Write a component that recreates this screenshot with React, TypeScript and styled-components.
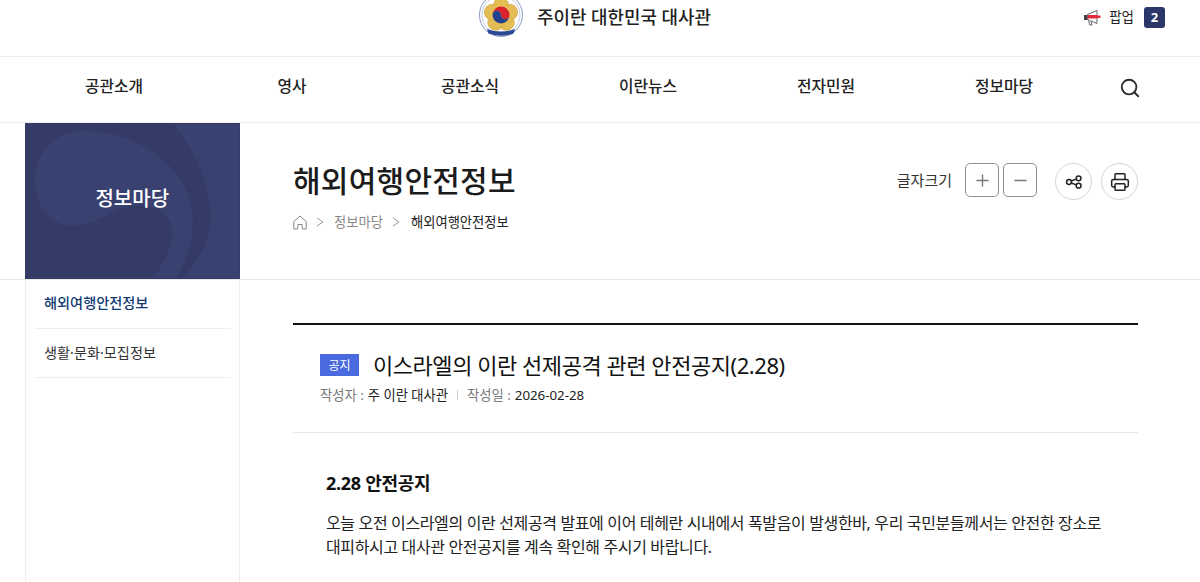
import styled, { createGlobalStyle } from "styled-components";
import { Search, Plus, Minus, Printer } from "lucide-react";

const GlobalStyle = createGlobalStyle`
  html, body {
    margin: 0;
    padding: 0;
    height: 582px;
    overflow: hidden;
    background: #fff;
    font-family: "Noto Sans", "Noto Sans CJK KR", sans-serif;
    color: #111;
  }
`;

const TopBar = styled.header`
  height: 56px;
  position: relative;
  display: flex;
  justify-content: center;
  overflow: hidden;
  border-bottom: 1px solid #eee;
`;

const Brand = styled.div`
  display: flex;
  align-items: center;
  gap: 13px;
  height: 32px;
  margin-left: -11px;
  font-size: 17.9px;
  font-weight: 500;
  color: #222;
`;

const Emblem = styled.svg`
  width: 46px;
  height: 46px;
  flex: none;
  align-self: flex-start;
  margin-top: -8px;
`;

const PopupLink = styled.div`
  position: absolute;
  right: 35px;
  top: 6px;
  display: flex;
  align-items: center;
  font-size: 13.5px;
  color: #222;
`;

const PopupLabel = styled.span`
  margin: 0 9px 2px 8px;
`;

const PopupCount = styled.span`
  width: 21px;
  height: 21px;
  margin-left: 1px;
  border-radius: 3px;
  background: #2b3768;
  color: #fff;
  font-size: 13px;
  font-weight: 700;
  display: flex;
  align-items: center;
  justify-content: center;
`;

const Nav = styled.nav`
  height: 65px;
  border-bottom: 1px solid #eee;
  display: flex;
  align-items: center;
  padding: 0 59px 0 25px;
`;

const NavList = styled.ul`
  list-style: none;
  margin: 0;
  padding: 0 0 8px;
  flex: 1;
  display: grid;
  grid-template-columns: repeat(6, 178px);
  justify-items: center;
`;

const NavItem = styled.li`
  font-size: 15.8px;
  font-weight: 500;
  color: #222;
`;

const SearchButton = styled.span`
  display: flex;
  color: #2a2a2a;
  margin-bottom: 4px;
`;

const Hero = styled.section`
  height: 156px;
  border-bottom: 1px solid #e8e8e8;
  display: flex;
  padding: 0 62px 0 25px;
`;

const SideTitle = styled.div`
  width: 214.5px;
  flex: none;
  position: relative;
  overflow: hidden;
  background: #343b67;
  display: flex;
  align-items: center;
  justify-content: center;
  padding-bottom: 7px;
  box-sizing: border-box;
  color: #fff;
  font-size: 20px;
  font-weight: 500;
`;

const SideSwirl = styled.svg`
  position: absolute;
  inset: 0;
  width: 100%;
  height: 100%;
`;

const SideTitleText = styled.span`
  position: relative;
`;

const HeroBody = styled.div`
  flex: 1;
  padding: 36px 0 0 53.5px;
  display: flex;
  justify-content: space-between;
`;

const PageTitle = styled.h1`
  margin: 0;
  font-size: 30px;
  line-height: 44px;
  font-weight: 500;
  letter-spacing: 0.25px;
  color: #1b1b1b;
`;

const Crumbs = styled.div`
  display: flex;
  align-items: center;
  margin-top: 9px;
  font-size: 13.3px;
  line-height: 20px;
  color: #888;
`;

const CrumbSep = styled.svg`
  width: 8px;
  height: 10px;
  margin: 0 10px 0 9px;
`;

const CrumbCurrent = styled.span`
  color: #222;
  margin-left: 1px;
`;

const Tools = styled.div`
  display: flex;
  align-items: flex-start;
  height: 38px;
  margin-top: 4px;
`;

const ToolLabel = styled.span`
  font-size: 15px;
  line-height: 35px;
  color: #333;
  margin-right: 13px;
`;

const SquareButton = styled.span`
  width: 34px;
  height: 34px;
  box-sizing: border-box;
  border: 1px solid #8f8f8f;
  border-radius: 5px;
  margin-right: 4px;
  display: flex;
  align-items: center;
  justify-content: center;
  color: #777;
`;

const RoundButton = styled.span<{ $gap: number }>`
  width: 37px;
  height: 37px;
  box-sizing: border-box;
  border: 1px solid #d4d4d4;
  border-radius: 50%;
  margin-left: ${(p) => p.$gap}px;
  display: flex;
  align-items: center;
  justify-content: center;
  color: #222;
`;

const Main = styled.div`
  display: flex;
  padding: 0 62px 0 25px;
  height: 302px;
`;

const Side = styled.aside`
  width: 215px;
  flex: none;
  box-sizing: border-box;
  border: solid #eee;
  border-width: 0 1px;
  padding: 0 8px;
`;

const SideItem = styled.div<{ $active?: boolean }>`
  height: 49px;
  box-sizing: border-box;
  border-bottom: 1px solid #eee;
  padding: 0 0 ${(p) => (p.$active ? 4 : 2)}px 10px;
  display: flex;
  align-items: center;
  font-size: 14.2px;
  font-weight: ${(p) => (p.$active ? 500 : 400)};
  color: ${(p) => (p.$active ? "#123a73" : "#333")};
`;

const Content = styled.main`
  flex: 1;
  margin: 43px 0 0 53px;
  border-top: 2px solid #111;
`;

const ArticleHead = styled.div`
  height: 108px;
  box-sizing: border-box;
  border-bottom: 1px solid #e8e8e8;
  padding: 25px 0 0 27px;
`;

const TitleRow = styled.div`
  display: flex;
  align-items: center;
  height: 30px;
`;

const Badge = styled.span`
  width: 39px;
  height: 22px;
  background: #4a6ae0;
  color: #fff;
  font-size: 12px;
  display: flex;
  align-items: center;
  justify-content: center;
  margin-right: 14px;
`;

const ArticleTitle = styled.h2`
  margin: 0 0 3px;
  font-size: 22px;
  font-weight: 400;
  color: #111;
  letter-spacing: -0.45px;
`;

const Meta = styled.div`
  display: flex;
  align-items: center;
  margin-top: 5px;
  font-size: 13.3px;
  line-height: 20px;
  color: #777;
`;

const MetaValue = styled.span`
  color: #222;
  margin-left: 4px;
`;

const MetaDivider = styled.span`
  width: 1px;
  height: 10px;
  background: #ccc;
  margin: 0 9px;
`;

const Article = styled.article`
  padding: 35px 30px 0 33px;
  white-space: nowrap;
`;

const ArticleHeading = styled.h3`
  margin: 0 0 13px;
  font-size: 18px;
  line-height: 30px;
  font-weight: 700;
  letter-spacing: -0.3px;
  color: #111;
`;

const Paragraph = styled.p`
  margin: 0;
  font-size: 16px;
  line-height: 24px;
  letter-spacing: -0.36px;
  color: #222;
`;

const petals = [0, 72, 144, 216, 288];

const EmblemMark = () => (
  <Emblem viewBox="0 0 46 46">
    <circle cx="23" cy="23" r="21.5" fill="#fff" stroke="#8b9ac6" strokeWidth="1" />
    <circle cx="23" cy="23" r="19" fill="none" stroke="#c3cbe2" strokeWidth="1" />
    {petals.map((deg) => (
      <ellipse key={deg} cx="23" cy="12.5" rx="7.5" ry="6.5" fill="#e5bd55" stroke="#c99c34" strokeWidth="0.5" transform={`rotate(${deg} 23 23)`} />
    ))}
    <circle cx="23" cy="23" r="10.5" fill="#e5bd55" />
    <path d="M14.5 23a8.5 8.5 0 0 1 17 0a4.25 4.25 0 0 1-8.5 0a4.25 4.25 0 0 0-8.5 0z" fill="#d8232f" />
    <path d="M14.5 23a8.5 8.5 0 0 0 17 0a4.25 4.25 0 0 1-8.5 0a4.25 4.25 0 0 0-8.5 0z" fill="#24418f" />
    <path d="M9 37q14 5 28 0l-1.500 4.500q-12.500 4.500-25 0z" fill="#2c4a94" />
  </Emblem>
);

const Megaphone = () => (
  <svg width="17" height="17" viewBox="0 0 17 17">
    <path d="M0 6h3.500v5H0z" fill="#444" />
    <path d="M3.500 5.500L13 1.500v13l-9.500-4z" fill="#fff" stroke="#666" strokeWidth="1" />
    <path d="M3.500 6h9.500v3.500H3.500z" fill="#e5283c" />
    <path d="M13 6.500h3.500v2.500H13z" fill="#e5283c" />
    <path d="M4.500 11l1.300 5h2.200l-1-4" fill="#fff" stroke="#666" strokeWidth="1" />
  </svg>
);

const ShareIcon = () => (
  <svg width="18" height="18" viewBox="0 0 18 18" fill="none" stroke="#222" strokeWidth="1.5">
    <circle cx="4" cy="9" r="2.4" />
    <circle cx="13.6" cy="5.300" r="2.4" />
    <circle cx="13.6" cy="12.700" r="2.4" />
    <path d="M6.200 8l5.200-1.900M6.200 10l5.200 1.900" />
  </svg>
);

const HomeIcon = () => (
  <svg width="14" height="15" viewBox="0 0 14 15" fill="none" stroke="#888" strokeWidth="1">
    <path d="M.8 6.600L7 1l6.200 5.600V14H9.200V9.500H4.800V14H.8z" />
  </svg>
);

const Chevron = () => (
  <CrumbSep viewBox="0 0 8 10" fill="none" stroke="#999" strokeWidth="1">
    <path d="M1 1l6 4-6 4" />
  </CrumbSep>
);

const navItems = ["공관소개", "영사", "공관소식", "이란뉴스", "전자민원", "정보마당"];

export default function App() {
  return (
    <>
      <GlobalStyle />
      <TopBar>
        <Brand>
          <EmblemMark />
          주이란 대한민국 대사관
        </Brand>
        <PopupLink>
          <Megaphone />
          <PopupLabel>팝업</PopupLabel>
          <PopupCount>2</PopupCount>
        </PopupLink>
      </TopBar>
      <Nav>
        <NavList>
          {navItems.map((item) => (
            <NavItem key={item}>{item}</NavItem>
          ))}
        </NavList>
        <SearchButton>
          <Search size={22} strokeWidth={2} />
        </SearchButton>
      </Nav>
      <Hero>
        <SideTitle>
          <SideSwirl viewBox="0 0 215 155">
            <path d="M148 0H215V155H158C180 130 190 105 185 82C180 45 165 20 148 0z" fill="#394170" />
            <path d="M58 7C115 7 165 45 168 92C170 118 160 138 152 155H128C143 135 152 115 146 100C138 80 115 78 95 85C80 92 65 102 48 102C22 102 10 80 10 55C10 28 32 7 58 7z" fill="#394170" />
          </SideSwirl>
          <SideTitleText>정보마당</SideTitleText>
        </SideTitle>
        <HeroBody>
          <div>
            <PageTitle>해외여행안전정보</PageTitle>
            <Crumbs>
              <HomeIcon />
              <Chevron />
              정보마당
              <Chevron />
              <CrumbCurrent>해외여행안전정보</CrumbCurrent>
            </Crumbs>
          </div>
          <Tools>
            <ToolLabel>글자크기</ToolLabel>
            <SquareButton>
              <Plus size={19} strokeWidth={1.7} />
            </SquareButton>
            <SquareButton>
              <Minus size={19} strokeWidth={1.7} />
            </SquareButton>
            <RoundButton $gap={14}>
              <ShareIcon />
            </RoundButton>
            <RoundButton $gap={9}>
              <Printer size={20} strokeWidth={1.8} />
            </RoundButton>
          </Tools>
        </HeroBody>
      </Hero>
      <Main>
        <Side>
          <SideItem $active>해외여행안전정보</SideItem>
          <SideItem>생활·문화·모집정보</SideItem>
        </Side>
        <Content>
          <ArticleHead>
            <TitleRow>
              <Badge>공지</Badge>
              <ArticleTitle>이스라엘의 이란 선제공격 관련 안전공지(2.28)</ArticleTitle>
            </TitleRow>
            <Meta>
              작성자 :<MetaValue>주 이란 대사관</MetaValue>
              <MetaDivider />
              작성일 :<MetaValue>2026-02-28</MetaValue>
            </Meta>
          </ArticleHead>
          <Article>
            <ArticleHeading>2.28 안전공지</ArticleHeading>
            <Paragraph>
              오늘 오전 이스라엘의 이란 선제공격 발표에 이어 테헤란 시내에서 폭발음이 발생한바, 우리 국민분들께서는 안전한 장소로
              <br />
              대피하시고 대사관 안전공지를 계속 확인해 주시기 바랍니다.
            </Paragraph>
          </Article>
        </Content>
      </Main>
    </>
  );
}
